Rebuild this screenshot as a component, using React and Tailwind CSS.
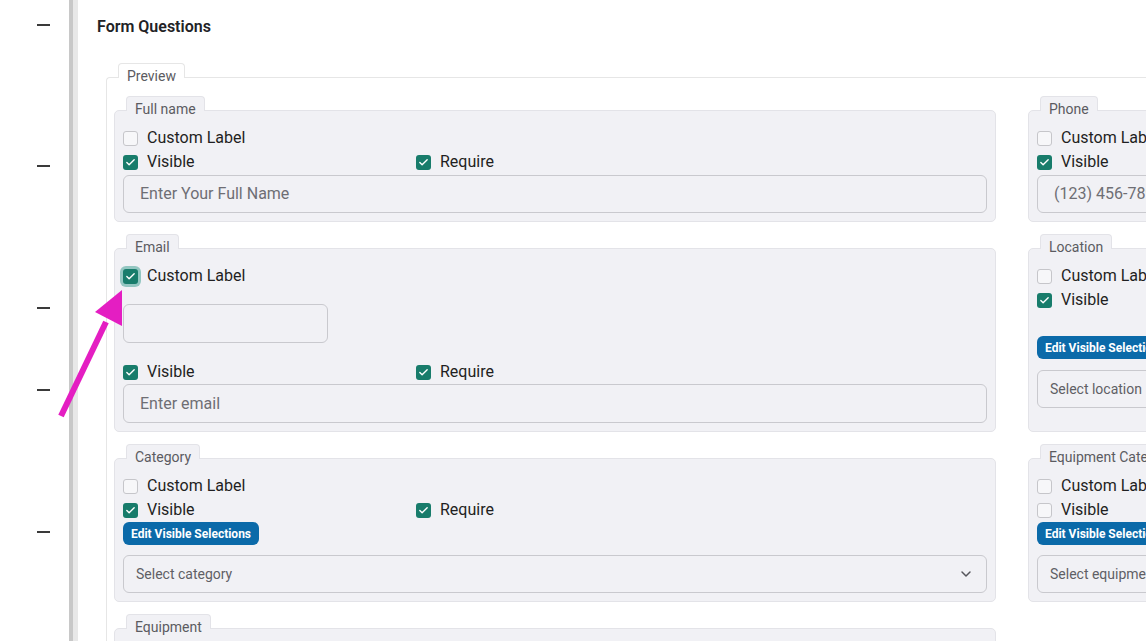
import { Check, ChevronDown } from 'lucide-react';

const font = { fontFamily: 'Roboto, "Noto Sans", sans-serif' };

const Box = ({ checked, focused }) => (
    <span
        className={`flex h-[15px] w-[15px] shrink-0 items-center justify-center rounded-[3px] ${
            checked ? 'bg-[#187c6b]' : 'border-[1.5px] border-[#c6c6ca] bg-[#f7f7f9]'
        } ${focused ? 'ring-[3px] ring-[#93c6c1]' : ''}`}
    >
        {checked && <Check className="text-white" size={11} strokeWidth={3} />}
    </span>
);

const CheckRow = ({ label, checked, focused, className = '' }) => (
    <label className={`flex h-6 items-center gap-[9px] text-[16px] text-[#1f1f22] ${className}`}>
        <Box checked={checked} focused={focused} />
        {label}
    </label>
);

const Tab = ({ children, bg = 'bg-[#f1f1f5]', border = 'border-[#e3e3e8]' }) => (
    <div
        className={`relative z-10 -mb-px ml-3 h-[15px] w-fit rounded-t-[4px] border border-b-0 px-2 pt-[4px] text-[14px] leading-4 text-[#5b5b61] ${bg} ${border}`}
    >
        {children}
    </div>
);

const Card = ({ title, children }) => (
    <div className="flex flex-col">
        <Tab>{title}</Tab>
        <div className="flex flex-1 flex-col rounded-[5px] border border-[#e3e3e8] bg-[#f1f1f5] px-2 pb-2 pt-[15px]">
            {children}
        </div>
    </div>
);

const TextInput = ({ placeholder = '', className = '' }) => (
    <div
        className={`flex items-center rounded-[6px] border border-[#c9c9ce] px-4 text-[16px] text-[#6e6e74] ${className}`}
    >
        {placeholder}
    </div>
);

const SelectBox = ({ placeholder }) => (
    <div className="mt-[10px] flex h-[38px] items-center justify-between rounded-[6px] border border-[#c9c9ce] pl-3 pr-[12px] text-[14px] text-[#5f5f65]">
        <span>{placeholder}</span>
        <ChevronDown className="text-[#55555b]" size={16} strokeWidth={2.2} />
    </div>
);

const EditButton = () => (
    <button className="h-[23px] w-fit rounded-[6px] bg-[#0b6aa9] px-2 text-[12px] font-bold text-white">
        Edit Visible Selections
    </button>
);

const VisibleRow = ({ visible = true, require = true }) => (
    <div className="flex">
        <CheckRow label="Visible" checked={visible} className="w-[293px]" />
        <CheckRow label="Require" checked={require} />
    </div>
);

const App = () => {
    return (
        <div className="relative flex h-[641px] w-[1146px] overflow-hidden bg-white" style={font}>
            {/* section toggles */}
            <div className="flex w-[69px] shrink-0 flex-col pl-[37px]">
                <div className="mt-[24px] h-[2px] w-[13px] bg-[#3a3a3a]" />
                <div className="mt-[139px] h-[2px] w-[13px] bg-[#3a3a3a]" />
                <div className="mt-[140px] h-[2px] w-[13px] bg-[#3a3a3a]" />
                <div className="mt-[80px] h-[2px] w-[13px] bg-[#3a3a3a]" />
                <div className="mt-[140px] h-[2px] w-[13px] bg-[#3a3a3a]" />
            </div>
            <div className="w-[4px] shrink-0 bg-[#c8c8c8]" />
            <div className="w-[5px] shrink-0 bg-[#e8e8e8]" />

            <main className="min-w-0 flex-1 pl-[19px]">
                <h2 className="mt-[17px] text-[16px] font-semibold leading-5 text-[#222226]">Form Questions</h2>

                <div className="ml-[9px] mt-[26px] w-[1400px]">
                    <Tab bg="bg-white" border="border-[#e6e6e6]">Preview</Tab>
                    <div className="rounded-tl-[4px] border-l border-t border-[#e6e6e6] pb-6 pl-[7px] pt-[18px]">
                        <div className="grid grid-cols-[882px_420px] gap-x-8 gap-y-3">
                            <Card title="Full name">
                                <CheckRow label="Custom Label" />
                                <VisibleRow />
                                <TextInput placeholder="Enter Your Full Name" className="mt-px h-[38px]" />
                            </Card>
                            <Card title="Phone">
                                <CheckRow label="Custom Label" />
                                <VisibleRow />
                                <TextInput placeholder="(123) 456-7890" className="mt-px h-[38px]" />
                            </Card>

                            <Card title="Email">
                                <CheckRow label="Custom Label" checked focused />
                                <TextInput className="mt-4 h-[39px] w-[205px]" />
                                <div className="mt-[17px]">
                                    <VisibleRow />
                                </div>
                                <TextInput placeholder="Enter email" className="h-[39px]" />
                            </Card>
                            <Card title="Location">
                                <CheckRow label="Custom Label" />
                                <CheckRow label="Visible" checked />
                                <div className="h-6" />
                                <EditButton />
                                <div className="mt-px">
                                    <SelectBox placeholder="Select location" />
                                </div>
                            </Card>

                            <Card title="Category">
                                <CheckRow label="Custom Label" />
                                <VisibleRow />
                                <EditButton />
                                <SelectBox placeholder="Select category" />
                            </Card>
                            <Card title="Equipment Category">
                                <CheckRow label="Custom Label" />
                                <CheckRow label="Visible" />
                                <EditButton />
                                <SelectBox placeholder="Select equipment category" />
                            </Card>

                            <Card title="Equipment">
                                <CheckRow label="Custom Label" />
                                <VisibleRow />
                                <EditButton />
                                <SelectBox placeholder="Select equipment" />
                            </Card>
                        </div>
                    </div>
                </div>
            </main>

            {/* callout arrow */}
            <svg
                className="pointer-events-none absolute inset-0"
                width="1146"
                height="641"
                viewBox="0 0 1146 641"
            >
                <line x1="61" y1="416" x2="106" y2="322" stroke="#e41ec2" strokeWidth="6" />
                <polygon points="122,290 95,312 122,326" fill="#e41ec2" />
            </svg>
        </div>
    );
};

export default App;
